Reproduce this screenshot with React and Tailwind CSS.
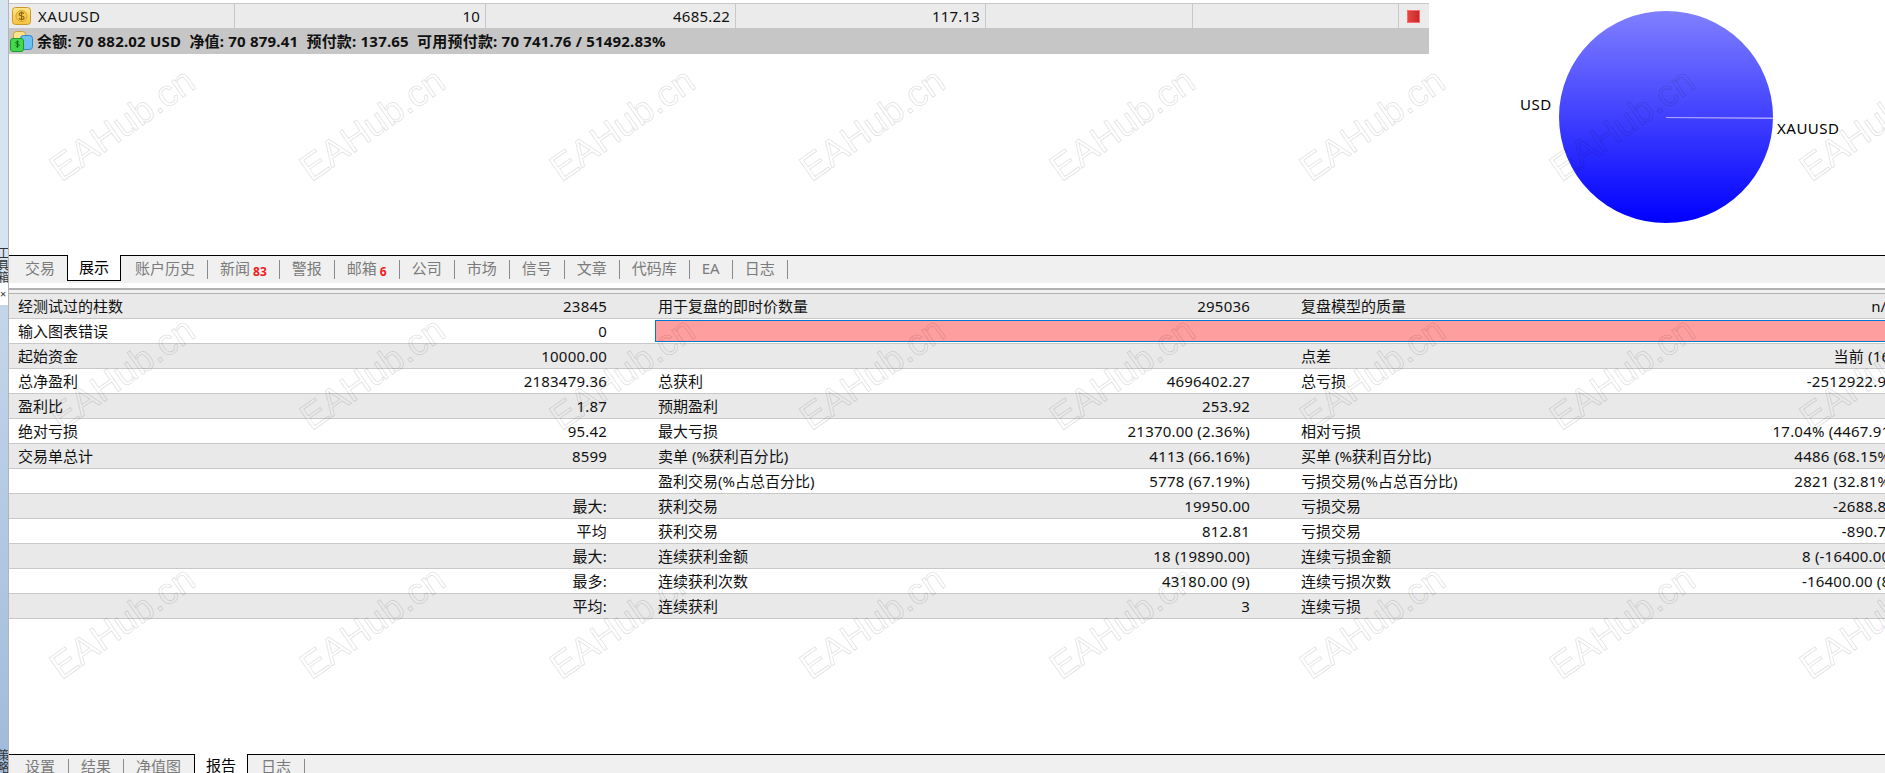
const font = { fontFamily: '"Noto Sans", "Noto Sans CJK SC", sans-serif' }

const upperTabs = [
  { label: '账户历史' },
  { label: '新闻', badge: '83' },
  { label: '警报' },
  { label: '邮箱', badge: '6' },
  { label: '公司' },
  { label: '市场' },
  { label: '信号' },
  { label: '文章' },
  { label: '代码库' },
  { label: 'EA' },
  { label: '日志' },
]

const rows = [
  ['经测试过的柱数', '23845', '用于复盘的即时价数量', '295036', '复盘模型的质量', 'n/a'],
  ['输入图表错误', '0'],
  ['起始资金', '10000.00', '', '', '点差', '当前 (16)'],
  ['总净盈利', '2183479.36', '总获利', '4696402.27', '总亏损', '-2512922.91'],
  ['盈利比', '1.87', '预期盈利', '253.92', '', ''],
  ['绝对亏损', '95.42', '最大亏损', '21370.00 (2.36%)', '相对亏损', '17.04% (4467.91)'],
  ['交易单总计', '8599', '卖单 (%获利百分比)', '4113 (66.16%)', '买单 (%获利百分比)', '4486 (68.15%)'],
  ['', '', '盈利交易(%占总百分比)', '5778 (67.19%)', '亏损交易(%占总百分比)', '2821 (32.81%)'],
  ['', '最大:', '获利交易', '19950.00', '亏损交易', '-2688.80'],
  ['', '平均', '获利交易', '812.81', '亏损交易', '-890.72'],
  ['', '最大:', '连续获利金额', '18 (19890.00)', '连续亏损金额', '8 (-16400.00)'],
  ['', '最多:', '连续获利次数', '43180.00 (9)', '连续亏损次数', '-16400.00 (8)'],
  ['', '平均:', '连续获利', '3', '连续亏损', ''],
]

const watermarkCells = Array.from({ length: 24 }, (_, i) => i)

const Separator = () => <span className="mt-[4px] h-[19px] w-px shrink-0 bg-[#8a8a8a]" />

const CoinIcon = () => (
  <svg width="19" height="18" viewBox="0 0 19 18" className="shrink-0">
    <defs>
      <linearGradient id="coin" x1="0" y1="0" x2="0" y2="1">
        <stop offset="0" stopColor="#ffe68a" />
        <stop offset="1" stopColor="#f5c23e" />
      </linearGradient>
    </defs>
    <rect x="0.5" y="0.5" width="18" height="17" rx="3" fill="url(#coin)" stroke="#c9992a" />
    <circle cx="9.5" cy="9" r="5.6" fill="#f2c94c" stroke="#dca52c" />
    <path d="M12 6.6c-.6-.7-1.4-1-2.5-1-1.4 0-2.4.7-2.4 1.7 0 2.4 5 1 5 3.4 0 1-1 1.7-2.6 1.7-1.1 0-2-.4-2.6-1.1M9.5 4.4v9.2" fill="none" stroke="#8a6414" strokeWidth="1.1" />
  </svg>
)

const BalanceIcon = () => (
  <svg width="23" height="21" viewBox="0 0 23 21" className="shrink-0">
    <rect x="3.5" y="0.5" width="12" height="12" rx="3" fill="#ffe28a" stroke="#c9a13a" />
    <rect x="10.5" y="4.5" width="12" height="14" rx="3" fill="#6cc0f2" stroke="#3386c4" />
    <rect x="0.5" y="7.5" width="13" height="13" rx="2.5" fill="#45d84f" stroke="#1f9a2c" />
    <path d="M9.2 11.2c-.4-.5-1-.7-1.8-.7-1 0-1.7.5-1.7 1.2 0 1.7 3.6.7 3.6 2.4 0 .7-.7 1.2-1.9 1.2-.8 0-1.4-.3-1.8-.8M7.4 9.5v7.5" fill="none" stroke="#0d6a1a" strokeWidth="1" />
  </svg>
)

const PieChart = () => (
  <svg width="456" height="255" viewBox="0 0 456 255" className="shrink-0">
    <defs>
      <linearGradient id="pie" x1="0" y1="0" x2="0" y2="1">
        <stop offset="0" stopColor="#8080ff" />
        <stop offset="1" stopColor="#0000ff" />
      </linearGradient>
    </defs>
    <ellipse cx="237" cy="117" rx="107" ry="106" fill="url(#pie)" />
    <polygon points="237,117 344,117.4 344,119 237,118" fill="#b0a8ff" />
    <text x="91" y="110" fontSize="15" letterSpacing="0.5" fill="#000">USD</text>
    <text x="348" y="134" fontSize="15" letterSpacing="0.5" fill="#000">XAUUSD</text>
  </svg>
)

const StatRow = ({ cells, index }) => {
  const striped = index % 2 === 0
  const hasError = cells.length === 2
  return (
    <div
      className={`grid h-[25px] shrink-0 grid-cols-[320px_326px_320px_323px_320px_280px] border-b border-[#c8c8c8] leading-[24px] ${
        striped ? 'bg-[#e9e9e9]' : 'bg-white'
      }`}
    >
      <div className="pl-[9px]">{cells[0]}</div>
      <div className="pr-[48px] text-right tracking-[0.2px]">{cells[1]}</div>
      {hasError ? (
        <div className="col-span-4 mt-[1px] h-[22px] border border-[#0078d7] bg-[#ff9e9e]" />
      ) : (
        <>
          <div className="pl-[3px]">{cells[2]}</div>
          <div className="pr-[48px] text-right tracking-[0.2px]">{cells[3]}</div>
          <div className="pl-[3px]">{cells[4]}</div>
          <div className="pr-[3px] text-right tracking-[0.2px]">{cells[5]}</div>
        </>
      )}
    </div>
  )
}

export default function App() {
  return (
    <div style={font} className="relative flex h-[773px] w-[1885px] overflow-hidden bg-white text-[15px] text-[#111]">
      {/* collapsed side panel */}
      <aside className="flex w-[9px] shrink-0 flex-col overflow-hidden border-r border-[#b4b4b4] text-[#333]">
        <div className="flex h-[283px] shrink-0 flex-col justify-end overflow-hidden bg-[#d6e4f1]">
          <span className="-ml-[3px] text-[12px] leading-[12px] [writing-mode:vertical-rl]">工具箱</span>
        </div>
        <div className="h-[22px] shrink-0 overflow-hidden text-[11px] leading-[22px]">×</div>
        <div className="flex flex-1 flex-col justify-end overflow-hidden bg-gradient-to-b from-[#c4d6ea] to-[#9fbbdb]">
          <span className="-ml-[3px] text-[12px] leading-[12px] [writing-mode:vertical-rl]">策略</span>
        </div>
      </aside>

      <main className="flex min-w-0 flex-1 flex-col">
        {/* positions + pie */}
        <section className="flex h-[255px] shrink-0 items-start">
          <div className="w-[1420px] shrink-0">
            <div className="h-[4px] border-b border-[#c8c8c8]" />
            <div className="flex h-[24px] items-center bg-[#ebebeb] leading-[24px]">
              <div className="flex h-full w-[226px] items-center gap-[7px] border-r border-[#c8c8c8] pl-[3px] tracking-[0.5px]">
                <CoinIcon />
                XAUUSD
              </div>
              <div className="h-full w-[251px] border-r border-[#c8c8c8] pr-[5px] text-right tracking-[0.2px]">10</div>
              <div className="h-full w-[250px] border-r border-[#c8c8c8] pr-[5px] text-right tracking-[0.2px]">4685.22</div>
              <div className="h-full w-[250px] border-r border-[#c8c8c8] pr-[5px] text-right tracking-[0.2px]">117.13</div>
              <div className="h-full w-[207px] border-r border-[#c8c8c8]" />
              <div className="h-full w-[206px] border-r border-[#c8c8c8]" />
              <div className="flex h-full flex-1 items-center pl-[8px]">
                <span className="h-[13px] w-[13px] border border-[#ff6a6a] bg-gradient-to-r from-[#e84444] to-[#c42a2a]" />
              </div>
            </div>
            <div className="flex h-[26px] items-center gap-[4px] bg-[#c6c6c6] pl-[1px] font-bold tracking-[0.2px] whitespace-pre">
              <BalanceIcon />
              <span>余额: 70 882.02 USD  净值: 70 879.41  预付款: 137.65  可用预付款: 70 741.76 / 51492.83%</span>
            </div>
          </div>
          <PieChart />
        </section>

        {/* toolbox tabs */}
        <nav className="flex h-[28px] shrink-0 border-t border-black bg-[#f0f0f0] leading-[24px] text-[#7b7b7b]">
          <div className="w-[58px] shrink-0 pl-[16px]">交易</div>
          <div className="-mt-px h-[26px] w-[54px] shrink-0 border-x border-b border-black bg-white text-center text-black">展示</div>
          <div className="flex pl-[14px]">
            {upperTabs.map((tab, i) => (
              <div key={tab.label} className="flex shrink-0">
                <span className={i === 0 ? 'pr-[12px]' : 'px-[12px]'}>
                  {tab.label}
                  {tab.badge && <span className="ml-[3px] align-[-2px] text-[12px] font-bold text-[#f01c1c]">{tab.badge}</span>}
                </span>
                <Separator />
              </div>
            ))}
          </div>
        </nav>

        <div className="h-[5px] shrink-0" />
        <div className="h-[5px] shrink-0 border-t-2 border-[#b0b0b0] bg-[#f0f0f0]" />

        {/* report table */}
        <section className="flex w-[1889px] flex-1 flex-col border-t border-[#b0b0b0]">
          {rows.map((cells, i) => (
            <StatRow key={i} cells={cells} index={i} />
          ))}
          <div className="flex-1" />
          <nav className="flex h-[19px] shrink-0 border-t border-black bg-[#f0f0f0] leading-[22px] text-[#7b7b7b]">
            <span className="pl-[16px] pr-[13px]">设置</span>
            <Separator />
            <span className="px-[12px]">结果</span>
            <Separator />
            <span className="w-[70px] px-[12px]">净值图</span>
            <div className="-mt-px h-[20px] w-[54px] border-x border-black bg-white text-center text-black">报告</div>
            <span className="px-[13px]">日志</span>
            <Separator />
          </nav>
        </section>
      </main>

      {/* watermark over the whole shot */}
      <div className="pointer-events-none absolute -left-[3px] top-0 grid w-[2000px] grid-cols-[repeat(8,250px)] grid-rows-[repeat(3,249px)]">
        {watermarkCells.map((i) => (
          <div key={i} className="flex items-center justify-center">
            <span
              style={{ fontFamily: '"Liberation Sans", sans-serif' }}
              className="-rotate-[35deg] text-[37px] leading-none text-transparent [-webkit-text-stroke:1px_rgba(0,0,0,0.12)]"
            >
              EAHub.cn
            </span>
          </div>
        ))}
      </div>
    </div>
  )
}
